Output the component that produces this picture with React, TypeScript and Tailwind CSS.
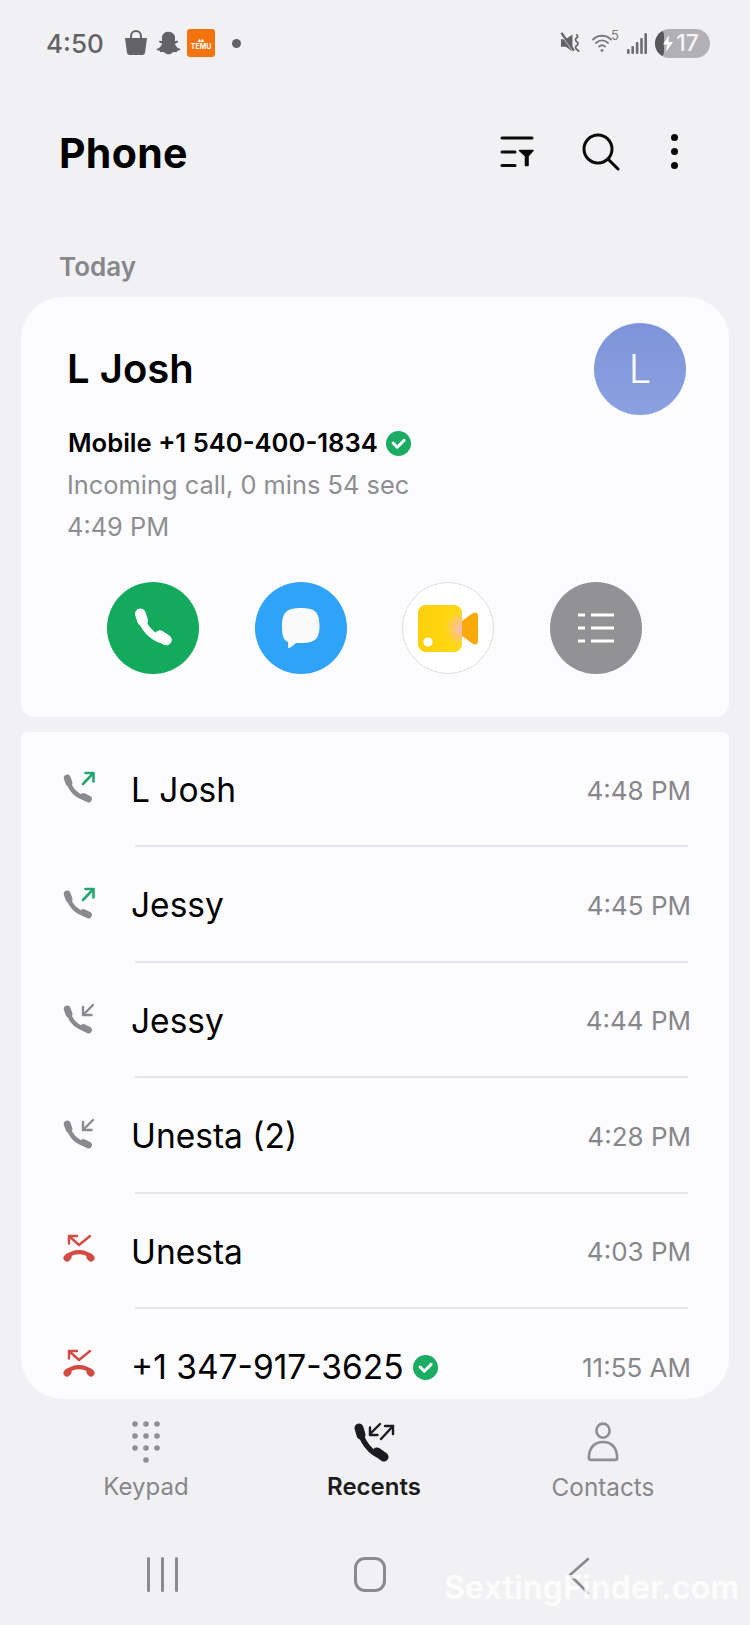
import React from "react";
import { FaSnapchatGhost } from "react-icons/fa";

function Handset({ color = "#8a8a8e", className = "" }: { color?: string; className?: string }) {
  return (
    <svg viewBox="0 0 24 24" className={className} fill="none" stroke={color} strokeLinecap="round">
      <path d="M5.4 4.6 L6.6 8.2" strokeWidth="5.6" />
      <path d="M6 6 C6.600 11.500 11.500 17 17.500 18.400" strokeWidth="3.800" />
      <path d="M15.600 16 L19 18.200" strokeWidth="5.600" />
    </svg>
  );
}

function Check({ size }: { size: number }) {
  return (
    <svg width={size} height={size} viewBox="0 0 24 24" className="shrink-0">
      <circle cx="12" cy="12" r="12" fill="#1bab62" />
      <path d="M6.800 11.600 L10.800 15.600 L17.400 9" fill="none" stroke="#fff" strokeWidth="2.800" strokeLinecap="round" strokeLinejoin="round" />
    </svg>
  );
}

function CallIcon({ type }: { type: "out" | "in" | "missed" }) {
  if (type === "missed") {
    return (
      <svg width="36" height="32" viewBox="0 0 36 32" fill="none" stroke="#d24b43" strokeLinecap="round" strokeLinejoin="round">
        <path d="M5 24 C11 17.500 23 17.500 29 24" strokeWidth="4.200" />
        <path d="M5 25 L6 24" strokeWidth="7" />
        <path d="M29 25 L28 24" strokeWidth="7" />
        <path d="M7 3 L17 12 L28 3" strokeWidth="2.400" />
        <path d="M7 10.500 L7 3 L15 3" strokeWidth="2.400" />
      </svg>
    );
  }
  const arrowColor = type === "out" ? "#24a66c" : "#8a8a8e";
  return (
    <svg width="34" height="34" viewBox="0 0 34 34" fill="none" strokeLinecap="round" strokeLinejoin="round">
      <g stroke="#8a8a8e" strokeLinecap="round">
        <path d="M5.200 8 L7 13" strokeWidth="6.800" />
        <path d="M6 10 C8 19 14 26 24 28.500" strokeWidth="4.400" />
        <path d="M21.500 26.500 L26.500 29" strokeWidth="6.800" />
      </g>
      {type === "out" ? (
        <g stroke={arrowColor} strokeWidth="2.600">
          <path d="M21 14 L31 3.500" />
          <path d="M23.500 3 L31.500 3 L31.500 11.500" />
        </g>
      ) : (
        <g stroke={arrowColor} strokeWidth="2.400">
          <path d="M31 4 L21 14" />
          <path d="M21 6 L21 14 L29.500 14" />
        </g>
      )}
    </svg>
  );
}

const rows: { type: "out" | "in" | "missed"; name: string; time: string; check?: boolean }[] = [
  { type: "out", name: "L Josh", time: "4:48 PM" },
  { type: "out", name: "Jessy", time: "4:45 PM" },
  { type: "in", name: "Jessy", time: "4:44 PM" },
  { type: "in", name: "Unesta (2)", time: "4:28 PM" },
  { type: "missed", name: "Unesta", time: "4:03 PM" },
  { type: "missed", name: "+1 347-917-3625", time: "11:55 AM", check: true },
];

function StatusBar() {
  return (
    <div className="h-[86px] flex items-center justify-between pl-[46px] pr-[40px] text-[#636366]">
      <div className="flex items-center">
        <span className="text-[26px] font-medium w-[78px]">4:50</span>
        <svg width="24" height="26" viewBox="0 0 24 26" fill="#636366">
          <path d="M1 8 H23 L21 23 Q20.700 25 18 25 H6 Q3.300 25 3 23 Z" />
          <path d="M7 9 V6 A5 5 0 0 1 17 6 V9" fill="none" stroke="#636366" strokeWidth="2" />
        </svg>
        <FaSnapchatGhost className="ml-[8px] w-[25px] h-[24px] text-[#636366]" />
        <div className="ml-[6px] w-[28px] h-[28px] rounded-[3px] bg-[#f5730f] flex flex-col items-center justify-center text-white font-bold leading-none">
          <span className="text-[6px] leading-[7px]">&#9652;&#9652;</span>
          <span className="text-[7px] leading-[8px]">TEMU</span>
        </div>
        <div className="ml-[17px] w-[9px] h-[9px] rounded-full bg-[#636366]" />
      </div>
      <div className="flex items-center">
        <svg width="22" height="22" viewBox="0 0 23 22" fill="#636366">
          <path d="M1 7 H6 L13 2 V20 L6 15 H1 Z" />
          <path d="M1 1 L15 21" stroke="#f1f1f3" strokeWidth="2" />
          <path d="M1.500 0.500 L14.500 19" stroke="#636366" strokeWidth="2.400" />
          <path d="M17 2 Q20 4 17 6 Q15 8 18 10 Q20 12 17 14 Q15 16 18 18 L20 20" fill="none" stroke="#636366" strokeWidth="1.800" />
        </svg>
        <div className="ml-[10px] relative w-[26px] h-[22px]">
          <svg width="26" height="22" viewBox="0 0 26 22" fill="none" stroke="#7a7a7d" strokeWidth="1.800" strokeLinecap="round">
            <path d="M1 7.500 C6 2.500 14 2.500 19 7.500" />
            <path d="M4 11 C7.500 7.500 12.500 7.500 16 11" />
            <path d="M7 14.500 C9 12.800 11 12.800 13 14.500" />
            <circle cx="10" cy="18.500" r="1.400" fill="#7a7a7d" stroke="none" />
          </svg>
          <span className="absolute left-[19px] -top-[3px] text-[13px] leading-none text-[#7a7a7d]">5</span>
        </div>
        <svg className="ml-[9px]" width="20" height="21" viewBox="0 0 20 21" fill="#6e6e71">
          <rect x="0" y="16" width="2.600" height="5" rx="1" />
          <rect x="4.400" y="13" width="2.600" height="8" rx="1" />
          <rect x="8.800" y="9" width="2.600" height="12" rx="1" />
          <rect x="13.200" y="5" width="2.600" height="16" rx="1" />
          <rect x="17.400" y="0" width="2.600" height="21" rx="1" />
        </svg>
        <div className="ml-[8px] w-[55px] h-[29px] rounded-full bg-[#b1b1b3] overflow-hidden relative flex items-center justify-end pr-[11px]">
          <div className="absolute left-0 top-0 bottom-0 w-[9px] bg-[#58585a] rounded-r-[6px]" />
          <svg className="absolute left-[8px] top-[6px]" width="10" height="17" viewBox="0 0 10 17" fill="#fff">
            <path d="M6 0 L0 9.500 H4 L3 17 L10 7 H5.500 Z" />
          </svg>
          <span className="text-[23px] font-medium text-[#f4f4f6] leading-none">17</span>
        </div>
      </div>
    </div>
  );
}

function Header() {
  return (
    <div className="h-[134px] flex items-center justify-between pl-[59px] pr-[72px]">
      <h1 className="text-[41px] font-bold text-black leading-none tracking-[0.3px]">Phone</h1>
      <div className="flex items-center -mt-[3px]">
        <svg width="34" height="33" viewBox="0 0 34 33" fill="none" stroke="#0a0a0a" strokeWidth="3" strokeLinecap="round">
          <path d="M2 3 H32" />
          <path d="M2 17 H15" />
          <path d="M2 30.500 H15" />
          <path d="M19.500 15.500 H33 L28 21 V30.500 H25.500 V21 Z" fill="#0a0a0a" strokeWidth="1.600" strokeLinejoin="round" />
        </svg>
        <svg className="ml-[48px]" width="38" height="38" viewBox="0 0 38 38" fill="none" stroke="#0a0a0a" strokeWidth="3" strokeLinecap="round">
          <circle cx="16" cy="16" r="14" />
          <path d="M26 26 L36 36" />
        </svg>
        <div className="ml-[51px] flex flex-col gap-[7px]">
          <div className="w-[7px] h-[7px] rounded-full bg-[#0a0a0a]" />
          <div className="w-[7px] h-[7px] rounded-full bg-[#0a0a0a]" />
          <div className="w-[7px] h-[7px] rounded-full bg-[#0a0a0a]" />
        </div>
      </div>
    </div>
  );
}

function DetailCard() {
  return (
    <div className="mx-[21px] h-[420px] bg-[#fcfcfe] rounded-t-[42px] rounded-b-[14px] pt-[26px] flex flex-col">
      <div className="flex justify-between pl-[46px] pr-[43px]">
        <div className="text-[40px] font-semibold text-black leading-[92px] h-[92px]">L Josh</div>
        <div className="w-[92px] h-[92px] rounded-full bg-gradient-to-b from-[#7d94da] to-[#8aa1e0] flex items-center justify-center text-white text-[40px] font-light">L</div>
      </div>
      <div className="pl-[47px] mt-[7px] flex items-center h-[42px]">
        <span className="text-[25.6px] font-semibold text-black">Mobile +1 540-400-1834</span>
        <span className="ml-[8px]"><Check size={25} /></span>
      </div>
      <div className="pl-[46px] h-[42px] flex items-center text-[25.4px] text-[#8e8e92]">Incoming call, 0 mins 54 sec</div>
      <div className="pl-[46px] h-[43px] flex items-center text-[25.4px] text-[#8e8e92]">4:49 PM</div>
      <div className="mt-[33px] pl-[86px] flex gap-[55.5px]">
        <div className="w-[92px] h-[92px] rounded-full bg-[#14aa5e] flex items-center justify-center">
          <Handset color="#ffffff" className="w-[46px] h-[46px]" />
        </div>
        <div className="w-[92px] h-[92px] rounded-full bg-[#2ea3f7] flex items-center justify-center">
          <svg width="40" height="42" viewBox="0 0 40 42">
            <path d="M20 1 C33 1 38.500 4 38.500 19 C38.500 33 33 36 20 36 L15 36 C12 39 9 41 7 41 C7 39.500 7.500 37.500 7 35 C2.500 33 1 29 1 19 C1 4 7 1 20 1 Z" fill="#fafafa" />
          </svg>
        </div>
        <div className="w-[92px] h-[92px] rounded-full bg-white border border-[#dedee0] flex items-center justify-center">
          <svg width="62" height="48" viewBox="0 0 62 48">
            <defs>
              <linearGradient id="vid" x1="0" y1="0" x2="1" y2="0">
                <stop offset="0" stopColor="#fdcf0c" />
                <stop offset="1" stopColor="#ffd913" />
              </linearGradient>
              <radialGradient id="pink" cx="1" cy="0.5" r="0.38">
                <stop offset="0" stopColor="#fcb8c8" />
                <stop offset="1" stopColor="#fcb8c8" stopOpacity="0" />
              </radialGradient>
            </defs>
            <rect x="1" y="1" width="44" height="47" rx="8" fill="url(#vid)" />
            <rect x="1" y="1" width="44" height="47" rx="8" fill="url(#pink)" />
            <path d="M45 17 L56 9 Q61 7 61 12 V37 Q61 42 56 40 L45 32 Z" fill="#faa90a" />
            <circle cx="11" cy="38" r="4.600" fill="#fff" />
          </svg>
        </div>
        <div className="w-[92px] h-[92px] rounded-full bg-[#929294] flex items-center justify-center">
          <svg width="38" height="32" viewBox="0 0 38 32" stroke="#fff" strokeWidth="3" fill="none">
            <path d="M1 3 H8 M14 3 H37" />
            <path d="M1 16 H8 M14 16 H37" />
            <path d="M1 29 H8 M14 29 H37" />
          </svg>
        </div>
      </div>
    </div>
  );
}

function CallList() {
  return (
    <div className="mx-[21px] mt-[15px] h-[667px] bg-[#fcfcfe] rounded-t-[6px] rounded-b-[42px] overflow-hidden">
      {rows.map((r, i) => (
        <div key={i} className="h-[115.4px] relative flex items-center pl-[41px] pr-[38px]">
          <div className="w-[70px] shrink-0 -mt-[5px]">
            <CallIcon type={r.type} />
          </div>
          <div className="flex items-center flex-1 text-[33.5px] text-black pt-[1px] -ml-[1px]">
            <span>{r.name}</span>
            {r.check && <span className="ml-[9px]"><Check size={25} /></span>}
          </div>
          <span className="text-[26px] text-[#87878b] pt-[1px]">{r.time}</span>
          {i < rows.length - 1 && <div className="absolute left-[114px] right-[41px] bottom-0 h-[2px] bg-[#e6e6e8]" />}
        </div>
      ))}
    </div>
  );
}

function BottomNav() {
  return (
    <div className="flex h-[120px] pt-[22px]">
      <div className="w-[292px] flex flex-col items-center">
        <svg width="28" height="42" viewBox="0 0 28 42" fill="#8f8f93">
          {[0, 1, 2].map((r) =>
            [0, 1, 2].map((c) => <circle key={`${r}${c}`} cx={3 + c * 11} cy={3 + r * 12} r="2.800" />)
          )}
          <circle cx="14" cy="39" r="2.800" />
        </svg>
        <span className="mt-[9px] text-[24px] text-[#87878b] leading-[30px]">Keypad</span>
      </div>
      <div className="w-[164px] flex flex-col items-center">
        <svg width="42" height="42" viewBox="0 0 42 42" fill="none" strokeLinecap="round" strokeLinejoin="round">
          <g stroke="#1c1c1e">
            <path d="M6 7 L8 14" strokeWidth="9" />
            <path d="M7 10 C9 20 17 32 28 35" strokeWidth="5.400" />
            <path d="M24 31 L31 36" strokeWidth="9" />
            <path d="M27 3 L17 13" strokeWidth="2.400" />
            <path d="M17 6.500 L17 14 L24.500 14" strokeWidth="2.400" />
            <path d="M28 18 L40 5" strokeWidth="2.400" />
            <path d="M32 5 L40 5 L40 13" strokeWidth="2.400" />
          </g>
        </svg>
        <span className="mt-[9px] text-[24px] font-semibold text-[#1c1c1e] leading-[30px]">Recents</span>
      </div>
      <div className="w-[292px] flex flex-col items-center pl-[2px]">
        <svg width="32" height="42" viewBox="0 0 34 42" fill="none" stroke="#8f8f93" strokeWidth="2.800">
          <ellipse cx="17" cy="9" rx="7" ry="7.500" />
          <path d="M2 38 C2 26 9 21 17 21 C25 21 32 26 32 38 Q32 40 30 40 H4 Q2 40 2 38 Z" />
        </svg>
        <span className="mt-[9px] text-[24.3px] text-[#87878b] leading-[30px]">Contacts</span>
      </div>
    </div>
  );
}

function SystemBar() {
  return (
    <div className="relative flex items-start h-[106px] pt-[38px]">
      <div className="ml-[147px] flex gap-[11px]">
        <div className="w-[3px] h-[35px] bg-[#8a8a8d] rounded-full" />
        <div className="w-[3px] h-[35px] bg-[#8a8a8d] rounded-full" />
        <div className="w-[3px] h-[35px] bg-[#8a8a8d] rounded-full" />
      </div>
      <div className="ml-[176px] w-[32px] h-[35px] border-[3px] border-[#8a8a8d] rounded-[11px]" />
      <svg className="ml-[182px]" width="22" height="38" viewBox="0 0 22 38" fill="none" stroke="#8a8a8d" strokeWidth="2.600" strokeLinecap="round" strokeLinejoin="round">
        <path d="M20 2 L2 18 L20 36" />
      </svg>
      <span className="absolute left-[444px] top-[49px] text-[32px] font-semibold text-white/80 leading-[40px] tracking-[0.3px]">SextingFinder.com</span>
    </div>
  );
}

export default function App() {
  return (
    <div className="w-[750px] h-[1625px] overflow-hidden bg-[#f1f1f3] font-['Inter','Liberation_Sans',sans-serif]">
      <StatusBar />
      <Header />
      <div className="h-[77px] pl-[59px] pt-[30px] text-[26px] font-semibold text-[#87878b] leading-[34px]">Today</div>
      <DetailCard />
      <CallList />
      <BottomNav />
      <SystemBar />
    </div>
  );
}
